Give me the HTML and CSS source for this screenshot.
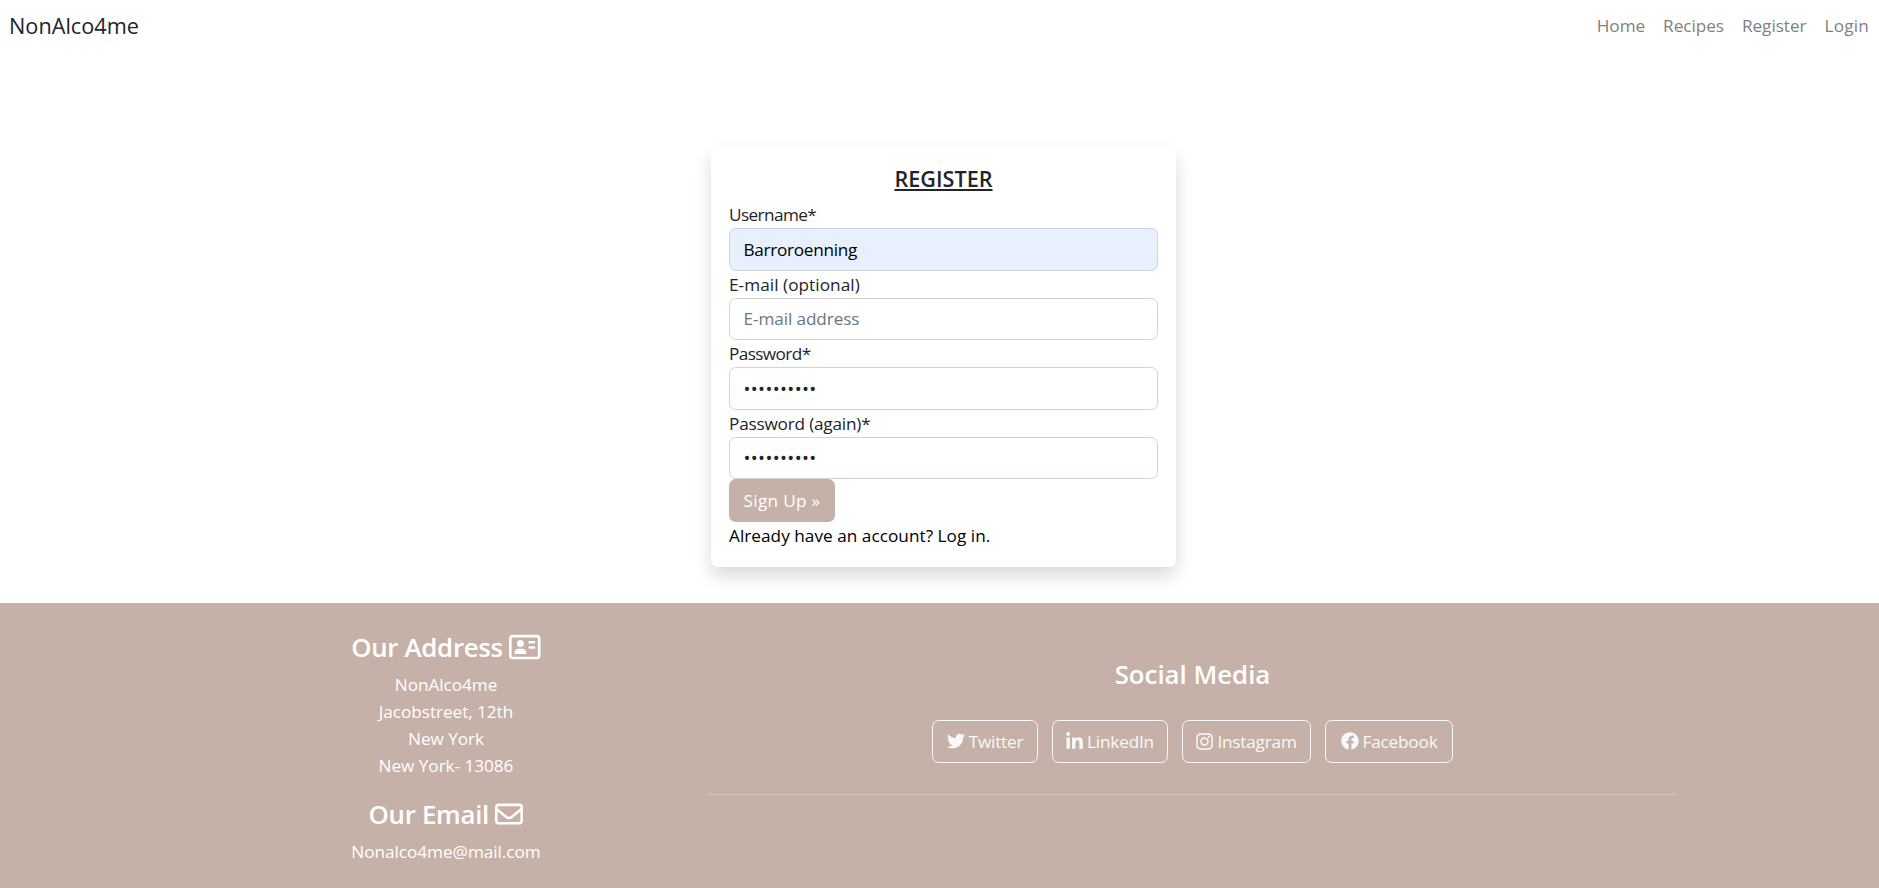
FILE: index.html
```html
<!DOCTYPE html>
<html lang="en">
<head>
<meta charset="utf-8">
<title>NonAlco4me</title>
<link rel="stylesheet" href="styles.css">
</head>
<body>
<header class="navbar">
  <a class="brand">NonAlco4me</a>
  <nav class="nav">
    <a class="nav-link">Home</a>
    <a class="nav-link">Recipes</a>
    <a class="nav-link">Register</a>
    <a class="nav-link nav-login">Login</a>
  </nav>
</header>
<main class="main">
  <form class="card">
    <h1 class="card-title">REGISTER</h1>
    <label class="label label-tight" for="username">Username*</label>
    <input class="input input-filled" id="username" type="text" value="Barroroenning">
    <label class="label" for="email">E-mail (optional)</label>
    <input class="input input-email" id="email" type="email" placeholder="E-mail address">
    <label class="label label-tight" for="password">Password*</label>
    <input class="input input-password" id="password" type="password" value="abcdefghij">
    <label class="label label-again" for="password2">Password (again)*</label>
    <input class="input input-password" id="password2" type="password" value="abcdefghij">
    <button class="submit" type="button">Sign Up »</button>
    <a class="login-link">Already have an account? Log in.</a>
  </form>
</main>
<footer class="footer">
  <section class="contact">
    <h2 class="heading heading-tight">Our Address
      <svg class="icon icon-card" viewBox="0 0 576 512"><path d="M512 80c8.800 0 16 7.200 16 16V416c0 8.800-7.200 16-16 16H64c-8.800 0-16-7.200-16-16V96c0-8.800 7.200-16 16-16H512zM64 32C28.700 32 0 60.700 0 96V416c0 35.300 28.700 64 64 64H512c35.300 0 64-28.700 64-64V96c0-35.300-28.700-64-64-64H64zM208 256a64 64 0 1 0 0-128 64 64 0 1 0 0 128zm-32 32c-44.200 0-80 35.800-80 80c0 8.800 7.200 16 16 16H304c8.800 0 16-7.200 16-16c0-44.200-35.800-80-80-80H176zM376 144c-13.300 0-24 10.700-24 24s10.700 24 24 24h80c13.300 0 24-10.700 24-24s-10.700-24-24-24H376zm0 96c-13.300 0-24 10.700-24 24s10.700 24 24 24h80c13.300 0 24-10.700 24-24s-10.700-24-24-24H376z"/></svg>
    </h2>
    <p class="text">NonAlco4me<br>Jacobstreet, 12th<br>New York<br>New York- 13086</p>
    <h2 class="heading heading-tight">Our Email
      <svg class="icon icon-mail" viewBox="0 0 512 512"><path d="M64 112c-8.800 0-16 7.200-16 16v22.100L220.500 291.700c20.700 17 50.400 17 71.100 0L464 150.100V128c0-8.800-7.200-16-16-16H64zM48 212.200V384c0 8.800 7.200 16 16 16H448c8.800 0 16-7.200 16-16V212.200L322 328.800c-38.400 31.500-93.700 31.500-132 0L48 212.200zM0 128C0 92.700 28.700 64 64 64H448c35.300 0 64 28.700 64 64V384c0 35.300-28.700 64-64 64H64c-35.300 0-64-28.700-64-64V128z"/></svg>
    </h2>
    <p class="text">Nonalco4me@mail.com</p>
  </section>
  <section class="social">
    <h2 class="heading heading-social">Social Media</h2>
    <div class="social-links">
      <a class="social-btn btn-twitter"><svg class="icon icon-twitter" viewBox="0 0 512 512"><path d="M459.370 151.716c.325 4.548.325 9.097.325 13.645 0 138.720-105.583 298.558-298.558 298.558-59.452 0-114.680-17.219-161.137-47.106 8.447.974 16.568 1.299 25.340 1.299 49.055 0 94.213-16.568 130.274-44.832-46.132-.975-84.792-31.188-98.112-72.772 6.498.974 12.995 1.624 19.818 1.624 9.421 0 18.843-1.300 27.614-3.573-48.081-9.747-84.143-51.980-84.143-102.985v-1.299c13.969 7.797 30.214 12.670 47.431 13.319-28.264-18.843-46.781-51.005-46.781-87.391 0-19.492 5.197-37.360 14.294-52.954 51.655 63.675 129.300 105.258 216.365 109.807-1.624-7.797-2.599-15.918-2.599-24.040 0-57.828 46.782-104.934 104.934-104.934 30.213 0 57.502 12.670 76.670 33.137 23.715-4.548 46.456-13.320 66.599-25.340-7.798 24.366-24.366 44.833-46.132 57.827 21.117-2.273 41.584-8.122 60.426-16.243-14.292 20.791-32.161 39.308-52.628 54.253z"/></svg>Twitter</a>
      <a class="social-btn btn-linkedin"><svg class="icon icon-linkedin" viewBox="0 0 448 512"><path d="M100.280 448H7.400V148.900h92.880zM53.790 108.100C24.090 108.100 0 83.500 0 53.800a53.790 53.790 0 0 1 107.580 0c0 29.700-24.100 54.300-53.790 54.300zM447.900 448h-92.680V302.400c0-34.700-.7-79.200-48.290-79.200-48.290 0-55.690 37.700-55.690 76.700V448h-92.780V148.900h89.080v40.800h1.300c12.400-23.500 42.690-48.300 87.880-48.300 94 0 111.280 61.900 111.280 142.300V448z"/></svg>LinkedIn</a>
      <a class="social-btn btn-instagram"><svg class="icon icon-instagram" viewBox="0 0 448 512"><path d="M224.100 141c-63.600 0-114.900 51.300-114.900 114.900s51.300 114.900 114.900 114.900S339 319.500 339 255.900 287.700 141 224.100 141zm0 189.600c-41.100 0-74.700-33.500-74.700-74.700s33.500-74.700 74.700-74.700 74.700 33.500 74.700 74.700-33.600 74.700-74.700 74.700zm146.400-194.300c0 14.900-12 26.800-26.800 26.800-14.900 0-26.800-12-26.800-26.800s12-26.800 26.800-26.800 26.800 12 26.800 26.800zm76.100 27.200c-1.700-35.900-9.900-67.700-36.200-93.900-26.200-26.200-58-34.400-93.900-36.200-37-2.100-147.900-2.100-184.900 0-35.800 1.700-67.600 9.900-93.900 36.100s-34.400 58-36.200 93.900c-2.100 37-2.100 147.900 0 184.900 1.700 35.900 9.900 67.700 36.200 93.900s58 34.400 93.900 36.200c37 2.100 147.900 2.100 184.900 0 35.900-1.700 67.700-9.900 93.900-36.200 26.200-26.200 34.400-58 36.200-93.900 2.100-37 2.100-147.800 0-184.800zM398.800 388c-7.800 19.600-22.900 34.700-42.600 42.600-29.500 11.700-99.500 9-132.100 9s-102.700 2.600-132.100-9c-19.600-7.800-34.700-22.900-42.600-42.600-11.700-29.500-9-99.500-9-132.100s-2.600-102.700 9-132.100c7.800-19.600 22.900-34.700 42.600-42.600 29.500-11.700 99.500-9 132.100-9s102.700-2.600 132.100 9c19.600 7.800 34.700 22.900 42.600 42.600 11.700 29.500 9 99.500 9 132.100s2.700 102.700-9 132.100z"/></svg>Instagram</a>
      <a class="social-btn btn-facebook"><svg class="icon icon-facebook" viewBox="0 0 512 512"><path d="M504 256C504 119 393 8 256 8S8 119 8 256c0 123.780 90.690 226.380 209.250 245V327.690h-63V256h63v-54.640c0-62.150 37-96.480 93.670-96.480 27.140 0 55.520 4.840 55.520 4.840v61h-31.280c-30.800 0-40.410 19.120-40.410 38.730V256h68.780l-11 71.690h-57.780V501C413.310 482.380 504 379.780 504 256z"/></svg>Facebook</a>
    </div>
    <hr class="divider">
  </section>
</footer>
</body>
</html>
```
FILE: styles.css
```css
* { box-sizing: border-box; }

body {
  margin: 0;
  background: #fff;
  color: #212529;
  font-family: "Open Sans", "Noto Sans", sans-serif;
  font-size: 17.2px;
  font-weight: 400;
  line-height: 27px;
}

/* Navigation */
.navbar {
  display: flex;
  justify-content: space-between;
  align-items: center;
  height: 51px;
  padding: 0 10px 0 9px;
}
.brand { font-size: 21.7px; line-height: 34px; }
.nav { display: flex; gap: 18px; }
.nav-link { color: #7f7f7f; letter-spacing: -0.05px; }
.nav-login { letter-spacing: 0.2px; }

/* Register form */
.main {
  display: flex;
  justify-content: center;
  height: 551.5px;
  padding: 96px 0 36px 8px;
}
.card {
  width: 465px;
  height: 420px;
  padding: 18px;
  border-radius: 6.75px;
  background: #fff;
  box-shadow: 0 9px 18px rgba(0, 0, 0, 0.15);
}
.card-title {
  margin: 0 0 9px;
  font-size: 21.6px;
  font-weight: 600;
  line-height: 27px;
  text-align: center;
  text-decoration: underline;
  text-decoration-thickness: 2px;
  text-underline-offset: 2px;
}
.label { display: block; letter-spacing: 0.05px; }
.label-tight { letter-spacing: -0.6px; }
.label-again { letter-spacing: -0.2px; }
.input {
  display: block;
  width: 100%;
  height: 42.5px;
  padding: 6.75px 13.5px;
  border: 1px solid #ced4da;
  border-radius: 6.75px;
  background: #fff;
  color: #212529;
  font: inherit;
}
.input::placeholder { color: #6c757d; opacity: 1; }
.input-email { letter-spacing: -0.1px; }
.input-filled {
  background: #e8f0fe;
  color: #000;
  letter-spacing: -0.3px;
}
.input-password { font-size: 18.5px; letter-spacing: 0.35px; }
.submit {
  display: block;
  width: 106px;
  height: 42.5px;
  padding: 0;
  border: 0;
  border-radius: 6.75px;
  background: #c6b1a8;
  color: #fff;
  font: inherit;
  letter-spacing: 0.3px;
}
.login-link { display: block; color: #000; letter-spacing: 0.03px; }

/* Footer */
.footer {
  display: flex;
  height: 285.5px;
  padding: 28px 202px 0 184px;
  background: #c6b1a8;
  color: #fff;
  text-align: center;
}
.contact { width: 524px; }
.social { width: 969px; }
.heading {
  margin: 0 0 8px;
  font-size: 25.8px;
  font-weight: 600;
  line-height: 32.4px;
}
.heading-tight { letter-spacing: -0.28px; }
.heading-social { padding-top: 27px; }
.text { margin: 0 0 19px; letter-spacing: -0.05px; }
.icon { fill: currentColor; }
.icon-card { width: 31.5px; height: 28px; vertical-align: -4px; }
.icon-mail { width: 28px; height: 28px; vertical-align: -4px; }

.social-links {
  display: flex;
  justify-content: center;
  gap: 14px;
  margin-top: 30px;
}
.social-btn {
  display: flex;
  align-items: center;
  justify-content: center;
  gap: 4px;
  height: 43px;
  border: 1px solid #f8f9fa;
  border-radius: 6.75px;
  color: #f8f9fa;
  letter-spacing: -0.2px;
}
.btn-twitter { width: 106px; }
.btn-linkedin { width: 116px; }
.btn-instagram { width: 129px; }
.btn-facebook { width: 128px; }
.icon-twitter, .icon-facebook { width: 18px; height: 18px; }
.icon-linkedin, .icon-instagram { width: 17px; height: 19px; }
.divider {
  height: 1px;
  margin: 31px 0 0;
  border: 0;
  background: #d6c5ba;
}
```
